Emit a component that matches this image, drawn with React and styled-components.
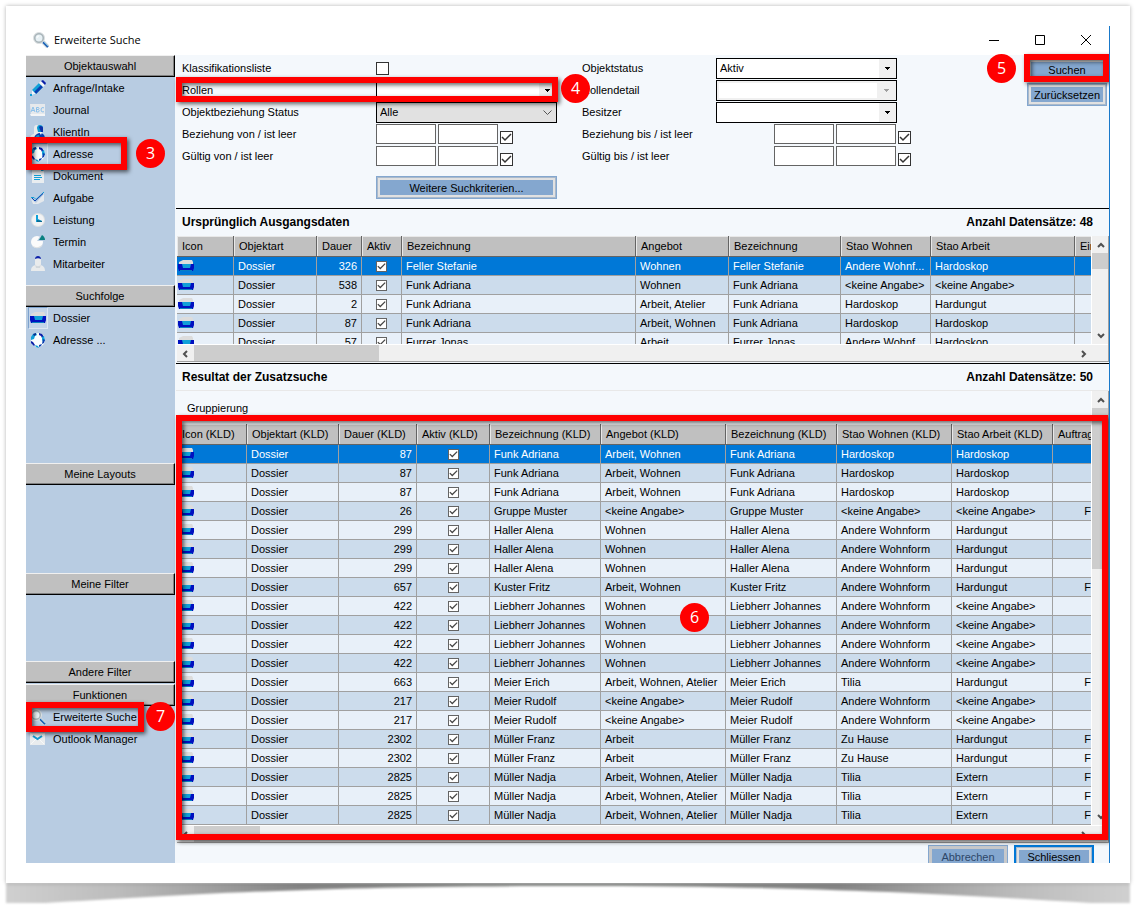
import { useState } from 'react'
import styled, { createGlobalStyle } from 'styled-components'

const SOURCE_COLUMNS = [
  { label: 'Icon', width: 57 },
  { label: 'Objektart', width: 83 },
  { label: 'Dauer', width: 45 },
  { label: 'Aktiv', width: 40 },
  { label: 'Bezeichnung', width: 234 },
  { label: 'Angebot', width: 93 },
  { label: 'Bezeichnung', width: 112 },
  { label: 'Stao Wohnen', width: 90 },
  { label: 'Stao Arbeit', width: 144 },
  { label: 'Eintritt' },
]

const RESULT_COLUMNS = [
  { label: 'Icon (KLD)', width: 70 },
  { label: 'Objektart (KLD)', width: 92 },
  { label: 'Dauer (KLD)', width: 78 },
  { label: 'Aktiv (KLD)', width: 73 },
  { label: 'Bezeichnung (KLD)', width: 111 },
  { label: 'Angebot (KLD)', width: 125 },
  { label: 'Bezeichnung (KLD)', width: 111 },
  { label: 'Stao Wohnen (KLD)', width: 115 },
  { label: 'Stao Arbeit (KLD)', width: 101 },
  { label: 'Auftrag' },
]

const NONE = '<keine Angabe>'

// [Dauer, Bezeichnung, Angebot, Stao Wohnen, Stao Arbeit, last column]
const SOURCE_ROWS = [
  [326, 'Feller Stefanie', 'Wohnen', 'Andere Wohnf...', 'Hardoskop'],
  [538, 'Funk Adriana', 'Wohnen', NONE, NONE],
  [2, 'Funk Adriana', 'Arbeit, Atelier', 'Hardoskop', 'Hardungut'],
  [87, 'Funk Adriana', 'Arbeit, Wohnen', 'Hardoskop', 'Hardoskop'],
  [57, 'Furrer Jonas', 'Arbeit', 'Andere Wohnf...', 'Hardoskop'],
]

const RESULT_ROWS = [
  [87, 'Funk Adriana', 'Arbeit, Wohnen', 'Hardoskop', 'Hardoskop'],
  [87, 'Funk Adriana', 'Arbeit, Wohnen', 'Hardoskop', 'Hardoskop'],
  [87, 'Funk Adriana', 'Arbeit, Wohnen', 'Hardoskop', 'Hardoskop'],
  [26, 'Gruppe Muster', NONE, NONE, NONE, 'F'],
  [299, 'Haller Alena', 'Wohnen', 'Andere Wohnform', 'Hardungut'],
  [299, 'Haller Alena', 'Wohnen', 'Andere Wohnform', 'Hardungut'],
  [299, 'Haller Alena', 'Wohnen', 'Andere Wohnform', 'Hardungut'],
  [657, 'Kuster Fritz', 'Arbeit, Wohnen', 'Andere Wohnform', 'Hardungut', 'F'],
  [422, 'Liebherr Johannes', 'Wohnen', 'Andere Wohnform', NONE],
  [422, 'Liebherr Johannes', 'Wohnen', 'Andere Wohnform', NONE],
  [422, 'Liebherr Johannes', 'Wohnen', 'Andere Wohnform', NONE],
  [422, 'Liebherr Johannes', 'Wohnen', 'Andere Wohnform', NONE],
  [663, 'Meier Erich', 'Arbeit, Wohnen, Atelier', 'Tilia', 'Hardungut', 'F'],
  [217, 'Meier Rudolf', NONE, 'Andere Wohnform', NONE],
  [217, 'Meier Rudolf', NONE, 'Andere Wohnform', NONE],
  [2302, 'Müller Franz', 'Arbeit', 'Zu Hause', 'Hardungut', 'F'],
  [2302, 'Müller Franz', 'Arbeit', 'Zu Hause', 'Hardungut', 'F'],
  [2825, 'Müller Nadja', 'Arbeit, Wohnen, Atelier', 'Tilia', 'Extern', 'F'],
  [2825, 'Müller Nadja', 'Arbeit, Wohnen, Atelier', 'Tilia', 'Extern', 'F'],
  [2825, 'Müller Nadja', 'Arbeit, Wohnen, Atelier', 'Tilia', 'Extern', 'F'],
]

export default function App() {
  return (
    <Page>
      <GlobalStyle />
      <Paper>
        <Window>
          <TitleBar>
            <SearchIcon />
            <Title>Erweiterte Suche</Title>
            <WindowButton aria-label="Minimieren">
              <Glyph d="M0 5.5h10" />
            </WindowButton>
            <WindowButton aria-label="Maximieren">
              <Glyph d="M.5 .5h9v9h-9z" />
            </WindowButton>
            <WindowButton aria-label="Fenster schliessen">
              <Glyph d="M0 0l10 10M10 0L0 10" />
            </WindowButton>
          </TitleBar>
          <Body>
            <Sidebar />
            <Main>
              <SearchForm />
              <GridTitle title="Ursprünglich Ausgangsdaten" count={48} />
              <GridFrame $height={126}>
                <DataGrid columns={SOURCE_COLUMNS} rows={SOURCE_ROWS} />
                <VerticalBar thumb={16} />
                <HorizontalBar thumb={185} />
              </GridFrame>
              <GridTitle title="Resultat der Zusatzsuche" count={50} ruled />
              <GridFrame>
                <div>
                  <GroupBar>Gruppierung</GroupBar>
                  <DataGrid columns={RESULT_COLUMNS} rows={RESULT_ROWS} />
                </div>
                <VerticalBar thumb={161} />
                <HorizontalBar thumb={66} />
                <Mark $top={24} $left={-1} $right={0} $bottom={2} />
                <Badge $top={212} $left={503}>
                  6
                </Badge>
              </GridFrame>
              <Footer>
                <Button disabled>Abbrechen</Button>
                <Button $primary>Schliessen</Button>
              </Footer>
            </Main>
          </Body>
        </Window>
      </Paper>
      <Curl viewBox="0 0 1000 20" preserveAspectRatio="none" aria-hidden="true">
        <defs>
          <linearGradient id="curl">
            <stop offset="0" stopColor="#d0d0d0" />
            <stop offset="0.1" stopColor="#bcbcbc" />
            <stop offset="0.26" stopColor="#858585" />
            <stop offset="0.5" stopColor="#8c8f8c" />
            <stop offset="0.74" stopColor="#858585" />
            <stop offset="0.9" stopColor="#bcbcbc" />
            <stop offset="1" stopColor="#d0d0d0" />
          </linearGradient>
        </defs>
        <path
          fill="url(#curl)"
          d="M0 0H1000V20H965C860 13 740 3 500 3S140 13 35 20H0Z"
        />
      </Curl>
    </Page>
  )
}

function Sidebar() {
  return (
    <Nav>
      <Section $height={230}>
        <SectionTitle>Objektauswahl</SectionTitle>
        <NavItem icon={<PencilIcon />}>Anfrage/Intake</NavItem>
        <NavItem icon={<JournalIcon />}>Journal</NavItem>
        <NavItem icon={<ClientIcon />}>KlientIn</NavItem>
        <NavItem
          icon={<GlobeIcon />}
          pressed
          mark={
            <>
              <Mark $top={-6} $left={0} $bottom={-5} $width={101} />
              <Badge $top={-4} $left={110}>
                3
              </Badge>
            </>
          }
        >
          Adresse
        </NavItem>
        <NavItem icon={<DocumentIcon />}>Dokument</NavItem>
        <NavItem icon={<CheckIcon />}>Aufgabe</NavItem>
        <NavItem icon={<ClockIcon />}>Leistung</NavItem>
        <NavItem icon={<PieIcon />}>Termin</NavItem>
        <NavItem icon={<PersonIcon />}>Mitarbeiter</NavItem>
      </Section>
      <Section $height={178}>
        <SectionTitle>Suchfolge</SectionTitle>
        <NavItem icon={<FolderIcon />} pressed>
          Dossier
        </NavItem>
        <NavItem icon={<GlobeIcon />}>Adresse ...</NavItem>
      </Section>
      <Section $height={110}>
        <SectionTitle>Meine Layouts</SectionTitle>
      </Section>
      <Section $height={88}>
        <SectionTitle>Meine Filter</SectionTitle>
      </Section>
      <Section $height={23}>
        <SectionTitle>Andere Filter</SectionTitle>
      </Section>
      <Section $height={66}>
        <SectionTitle>Funktionen</SectionTitle>
        <NavItem
          icon={<SearchIcon />}
          mark={
            <>
              <Mark $top={-4} $left={0} $bottom={-4} $width={118} />
              <Badge $top={-4} $left={120}>
                7
              </Badge>
            </>
          }
        >
          Erweiterte Suche
        </NavItem>
        <NavItem icon={<MailIcon />}>Outlook Manager</NavItem>
      </Section>
    </Nav>
  )
}

function NavItem({ icon, pressed, mark, children }) {
  return (
    <NavRow>
      <NavButton>
        <IconSlot $pressed={pressed}>{icon}</IconSlot>
        {children}
      </NavButton>
      {mark}
    </NavRow>
  )
}

function SearchForm() {
  return (
    <Form onSubmit={event => event.preventDefault()}>
      <FieldGroup $label={200} $width={400}>
        <Row>
          <label htmlFor="list">Klassifikationsliste</label>
          <CheckBox id="list" type="checkbox" />
        </Row>
        <Row>
          <label htmlFor="roles">Rollen</label>
          <Combo id="roles" />
          <Mark $top={-2} $left={0} $bottom={-1} $width={382} />
          <Badge $top={-5} $left={385}>
            4
          </Badge>
        </Row>
        <Row>
          <label htmlFor="relation">Objektbeziehung Status</label>
          <Combo id="relation" value="Alle" flat />
        </Row>
        <DateRow id="relation-from" label="Beziehung von / ist leer" />
        <DateRow id="valid-from" label="Gültig von / ist leer" />
        <MoreButton>Weitere Suchkriterien...</MoreButton>
      </FieldGroup>
      <FieldGroup $label={140} $width={340}>
        <Row>
          <label htmlFor="status">Objektstatus</label>
          <Combo id="status" value="Aktiv" />
        </Row>
        <Row>
          <label htmlFor="role-detail">Rollendetail</label>
          <Combo id="role-detail" disabled />
        </Row>
        <Row>
          <label htmlFor="owner">Besitzer</label>
          <Combo id="owner" />
        </Row>
        <DateRow id="relation-to" label="Beziehung bis / ist leer" labelWidth={198} />
        <DateRow id="valid-to" label="Gültig bis / ist leer" labelWidth={198} />
      </FieldGroup>
      <Actions>
        <ActionSlot>
          <Button type="submit">Suchen</Button>
          <Mark $top={-4} $left={-3} $right={-2} $bottom={-1} />
          <Badge $top={-4} $left={-40}>
            5
          </Badge>
        </ActionSlot>
        <Button type="reset">Zurücksetzen</Button>
      </Actions>
    </Form>
  )
}

function Combo({ id, value = '', flat, disabled }) {
  return (
    <ComboBox>
      <Select id={id} $flat={flat} disabled={disabled} defaultValue={value}>
        <option>{value}</option>
      </Select>
      <ComboArrow $flat={flat} $disabled={disabled}>
        {flat ? (
          <svg width="9" height="5" fill="none" stroke="#555">
            <path d="M.5 .5l4 4 4-4" />
          </svg>
        ) : (
          <svg width="5" height="3" fill={disabled ? '#a0a0a0' : '#000'}>
            <path d="M0 0h5v1H4v1H3v1H2V2H1V1H0z" />
          </svg>
        )}
      </ComboArrow>
    </ComboBox>
  )
}

function DateRow({ id, label, labelWidth }) {
  return (
    <Row $label={labelWidth}>
      <label htmlFor={id}>{label}</label>
      <DateInput id={id} />
      <DateInput aria-label={`${label}, Ende`} />
      <CheckBox type="checkbox" aria-label={`${label}: leer`} defaultChecked $low />
    </Row>
  )
}

function GridTitle({ title, count, ruled }) {
  return (
    <GridHeading $ruled={ruled}>
      <h2>{title}</h2>
      <h2>Anzahl Datensätze: {count}</h2>
    </GridHeading>
  )
}

function DataGrid({ columns, rows }) {
  const [selected, setSelected] = useState(0)
  return (
    <Clip>
      <Table>
        <colgroup>
          {columns.map((column, index) => (
            <Col key={index} $width={column.width} />
          ))}
        </colgroup>
        <thead>
          <tr>
            {columns.map((column, index) => (
              <HeadCell key={index}>{column.label}</HeadCell>
            ))}
          </tr>
        </thead>
        <tbody>
          {rows.map(([days, name, offer, living, work, order], index) => (
            <BodyRow
              key={index}
              $selected={index === selected}
              onClick={() => setSelected(index)}
            >
              <Cell $icon>
                <FolderIcon />
              </Cell>
              <Cell>Dossier</Cell>
              <Cell $align="right">{days}</Cell>
              <Cell $align="center">
                <CellCheck type="checkbox" aria-label="Aktiv" defaultChecked />
              </Cell>
              <Cell>{name}</Cell>
              <Cell>{offer}</Cell>
              <Cell>{name}</Cell>
              <Cell>{living}</Cell>
              <Cell>{work}</Cell>
              <Cell $align="right">{order}</Cell>
            </BodyRow>
          ))}
        </tbody>
      </Table>
    </Clip>
  )
}

function VerticalBar({ thumb }) {
  return (
    <VBar>
      <BarButton aria-label="Nach oben">
        <Arrow d="M1 6l3-3 3 3" />
      </BarButton>
      <VThumb $size={thumb} />
      <BarButton aria-label="Nach unten">
        <Arrow d="M1 2l3 3 3-3" />
      </BarButton>
    </VBar>
  )
}

function HorizontalBar({ thumb }) {
  return (
    <HBar>
      <BarButton aria-label="Nach links">
        <Arrow d="M5 1L2 4l3 3" />
      </BarButton>
      <HThumb $size={thumb} />
      <BarButton aria-label="Nach rechts">
        <Arrow d="M2 1l3 3-3 3" />
      </BarButton>
    </HBar>
  )
}

const Arrow = ({ d }) => (
  <svg width="8" height="8" fill="none" stroke="#505050" strokeWidth="2">
    <path d={d} />
  </svg>
)

const Glyph = ({ d }) => (
  <svg width="10" height="10" fill="none" stroke="#000">
    <path d={d} />
  </svg>
)

const Icon = ({ children }) => (
  <svg width="16" height="16" viewBox="0 0 16 16" fill="none" aria-hidden="true">
    {children}
  </svg>
)

const SearchIcon = () => (
  <Icon>
    <path d="M10 10l5 5" stroke="#d2dae0" strokeWidth="4" />
    <path d="M10 10l5 5" stroke="#1d5fb4" strokeWidth="2" />
    <path d="M11 10l4 4" stroke="#7fb9dc" />
    <circle cx="6" cy="6" r="4.5" fill="#e8f1f5" stroke="#a8b4b9" strokeWidth="2" />
    <circle cx="6" cy="6" r="5.5" stroke="#dde1e3" />
    <path d="M4 6a2 2 0 0 1 2-2" stroke="#fff" />
  </Icon>
)

const PencilIcon = () => (
  <Icon>
    <path d="M2 10l7-7 4 4-7 7-4 1z" fill="#10a0d8" />
    <path d="M4 12l7-7 2 2-7 7z" fill="#0b3fb0" />
    <path d="M9 3l2-2 4 4-2 2z" fill="#f4f6f8" />
    <path d="M11 1l2-1 3 3-1 2z" fill="#0b1fa8" />
    <path d="M2 10l4 4-4 1z" fill="#f4f6f8" />
    <path d="M0 14h2v2H0z" fill="#10a0d8" />
  </Icon>
)

const JournalIcon = () => (
  <Icon>
    <path d="M0 2h15v12H1z" fill="#e6e9ec" />
    <path d="M0 12h15v2H1z" fill="#f4f5f6" />
    <path
      d="M1 10l2-5 2 5M2 8.500h2M6.500 10V5.500h2l.5 1-.5 1h-2m2 0l.7 1.200-.7 1.300h-2M14 6l-1-.5-1.500.5-.5 2 .5 1.500 1.500.5 1-.5"
      stroke="#8cc0ea"
    />
  </Icon>
)

const ClientIcon = () => (
  <Icon>
    <path d="M4 4c0-4 5-4 5 0v4l2 7H0c0-3 1-4 4-5z" fill="#e9ebec" />
    <path d="M7 4c0-4 6-4 6 0v4H8z" fill="#0a98d0" />
    <path d="M9 3c1-2 4-1 4 1v4h-2z" fill="#0b2fa8" />
    <path d="M4 15c0-3 2-5 5-6 4 0 6 2 6 6z" fill="#0b3fb0" />
    <path d="M9 8h3l-1 3z" fill="#f4f6f8" />
    <path d="M5 14c1-2 2-3 4-3l1 4z" fill="#10a0d8" />
  </Icon>
)

const GlobeIcon = () => (
  <Icon>
    <circle cx="8" cy="8" r="7" fill="#fbfdfe" />
    <path d="M1 5l2-3 3-1 1 2-2 1-1 3-3 1z" fill="#10a0d8" />
    <path d="M3 2l3-1v2L4 4z" fill="#0b2f90" />
    <path d="M9 1l3 1 2 3-2 1-1-2-2-1z" fill="#0b1fa8" />
    <path d="M12 5l2-1 1 4-2 2-1-2z" fill="#10a0d8" />
    <path d="M13 7l2 1-1 3-2 1z" fill="#0b3fb0" />
    <path d="M1 9l2 1 2 3-1 1-3-3z" fill="#0b1fa8" />
    <path d="M5 13l3 1 1 2-3-1z" fill="#10a0d8" />
    <path d="M9 13l3-1-1 2-2 1z" fill="#0b3fb0" />
  </Icon>
)

const DocumentIcon = () => (
  <Icon>
    <path d="M2 0h9l3 3v12H2z" fill="#e9edf0" />
    <path d="M11 0l3 3h-3z" fill="#10a0d8" />
    <path d="M4 7h7v1H4zM4 9h8v1H4zM4 11h6v1H4z" fill="#10a0d8" />
  </Icon>
)

const CheckIcon = () => (
  <Icon>
    <path d="M1 9l5 4 8-9v7l-6 3H3z" fill="#e4e8ec" />
    <path d="M1 7.500h3l2 2L14 2" stroke="#10a0d8" />
    <path d="M2 8l3 3 8-7.500" stroke="#0b3fae" />
  </Icon>
)

const ClockIcon = () => (
  <Icon>
    <circle cx="8" cy="8" r="7" fill="#dfe1e2" />
    <circle cx="8" cy="8" r="6" fill="#f2f3f4" />
    <path d="M6 3h2v4l4 2v1H6z" fill="#10a0d8" />
    <path d="M7 8l5 1v1H7z" fill="#0a6a90" />
  </Icon>
)

const PieIcon = () => (
  <Icon>
    <circle cx="7" cy="8" r="6" fill="#fbfbfb" />
    <path d="M2 11c3 3 7 3 11-1-1 5-9 6-11 1z" fill="#dde0e2" />
    <path d="M7 7l4-6c3 1 4 3 4 6z" fill="#b8cce2" />
    <path d="M9 6l3-5c2 1 3 3 3 5z" fill="#0a8080" />
  </Icon>
)

const PersonIcon = () => (
  <Icon>
    <path d="M1 15c0-4 2-5 4-6V4c0-4 6-4 6 0v5c2 1 4 2 4 6z" fill="#e9ebec" />
    <path d="M5 8c1 3 5 3 6 0l-1 4H6z" fill="#d2d7db" />
    <path d="M5 3c0-4 6-4 6 0-2-1-4-1-6 0z" fill="#0b1fa8" />
  </Icon>
)

const MailIcon = () => (
  <Icon>
    <path d="M0 2h15v12H0z" fill="#e9ecee" />
    <path d="M1 3l4 3h5l4-3" stroke="#f8f9f9" />
    <path d="M3 5l4.500 3L12 5" stroke="#149bd2" strokeWidth="2" />
    <path d="M1 13l5-5M14 13L9 8" stroke="#f8f9f9" />
  </Icon>
)

const FolderIcon = () => (
  <Icon>
    <path d="M3 3l2-1h9l1 2v3H1V4z" fill="#dcdcdc" />
    <path d="M0 6h16v4l-1 3H1L0 10z" fill="#0010c0" />
    <path d="M4 6h9l-1 4H5z" fill="#10a0d8" />
    <path d="M2 12h12v1H2z" fill="#0a80c0" />
  </Icon>
)

const tick = color =>
  `url("data:image/svg+xml,%3Csvg xmlns='http://www.w3.org/2000/svg' viewBox='0 0 11 11'%3E%3Cpath d='M1 5l3 3 6-6' fill='none' stroke='%23${color}' stroke-width='1.500'/%3E%3C/svg%3E")`

const GlobalStyle = createGlobalStyle`
  *, *::before, *::after { box-sizing: border-box; }
  body {
    margin: 0;
    background: #fff;
    color: #000;
    font: 11px/14px 'Liberation Sans', Arial, sans-serif;
  }
  button, input, select { margin: 0; color: inherit; font: inherit; }
`

const Page = styled.div`
  display: flex;
  flex-direction: column;
  height: 100vh;
  min-height: 640px;
  padding: 6px 14px 9px 6px;
`

const Paper = styled.div`
  position: relative;
  z-index: 1;
  display: flex;
  flex: 1;
  min-height: 0;
  padding: 20px;
  background: #fff;
  box-shadow: 0 0 4px rgba(0, 0, 0, 0.3);
`

const Curl = styled.svg`
  width: 100%;
  height: 20px;
  overflow: visible;
  filter: blur(1px);
`

const Window = styled.div`
  display: flex;
  flex: 1;
  flex-direction: column;
  min-width: 0;
  overflow: hidden;
  border-right: 1px solid #1979ca;
`

const TitleBar = styled.header`
  display: flex;
  flex: none;
  align-items: center;
  height: 29px;
  padding: 0 0 2px 7px;
`

const Title = styled.h1`
  flex: 1;
  margin: 0 0 0 5px;
  font: 11px/16px 'Open Sans', sans-serif;
`

const WindowButton = styled.button`
  display: grid;
  place-items: center;
  width: 46px;
  height: 27px;
  padding: 0;
  border: 0;
  background: none;
`

const Body = styled.div`
  display: flex;
  flex: 1;
  min-height: 0;
`

const Nav = styled.nav`
  flex: none;
  width: 149px;
  background: #b8cce2;
`

const Section = styled.section`
  min-height: ${props => props.$height}px;
`

const SectionTitle = styled.h2`
  height: 22px;
  margin: 0;
  border-top: 1px solid #f0f0f0;
  border-right: 1px solid #000;
  border-bottom: 1px solid #000;
  box-shadow: inset -1px -1px #808080;
  background: #c0c0c0;
  font-size: 11px;
  font-weight: normal;
  line-height: 20px;
  text-align: center;
`

const NavRow = styled.div`
  position: relative;
  height: 22px;
`

const NavButton = styled.button`
  display: flex;
  align-items: center;
  gap: 5px;
  width: 100%;
  height: 22px;
  padding: 0 0 0 2px;
  border: 0;
  background: none;
  text-align: left;
`

const IconSlot = styled.span`
  display: grid;
  place-items: center;
  width: 20px;
  height: 22px;
  border: 1px solid transparent;
  ${props =>
    props.$pressed &&
    'border-color: #7da2ce #dce6f2 #dce6f2 #7da2ce; background: #c3d4e8;'}
`

const Main = styled.main`
  display: flex;
  flex: 1;
  flex-direction: column;
  min-width: 0;
  padding-left: 1px;
  background: #f4f8fc;
`

const Form = styled.form`
  display: flex;
  flex: none;
  height: 154px;
  padding-top: 2px;
  border-bottom: 1px solid #000;
`

const FieldGroup = styled.div`
  --label: ${props => props.$label}px;
  width: ${props => props.$width}px;
`

const Row = styled.div`
  position: relative;
  display: flex;
  align-items: center;
  gap: 2px;
  height: 22px;

  > label {
    width: ${props => (props.$label ? `${props.$label}px` : 'var(--label)')};
    margin-right: -2px;
    padding-left: 6px;
  }
`

const ComboBox = styled.div`
  display: grid;
  width: 181px;
`

const Select = styled.select`
  grid-area: 1 / 1;
  height: 21px;
  padding: 0 20px 0 3px;
  border: 1px solid #000;
  border-radius: 0;
  outline: 0;
  appearance: none;
  background: ${props => (props.$flat ? '#e1e1e1' : '#fff')};
  opacity: 1;

  &:disabled {
    box-shadow: inset 0 0 0 2px #f0f0f0;
  }
`

const ComboArrow = styled.span`
  display: grid;
  grid-area: 1 / 1;
  place-items: center;
  justify-self: end;
  width: ${props => (props.$disabled ? 19 : 17)}px;
  margin: 1px;
  background: ${props => (props.$flat ? '#e1e1e1' : '#f0f0f0')};
  pointer-events: none;
`

const DateInput = styled.input`
  width: 60px;
  height: 20px;
  padding: 0 2px;
  border: 1px solid #646464;
  border-radius: 0;
  background: #fff;
`

const CheckBox = styled.input`
  width: 13px;
  height: 13px;
  border: 1px solid #333;
  appearance: none;
  background: #fff;
  ${props => props.$low && 'align-self: flex-end; margin-bottom: 1px;'}

  &:checked {
    background: #fff ${tick('333')} center / 11px;
  }
`

const Button = styled.button`
  min-width: 80px;
  height: 23px;
  padding: 0 6px;
  border: ${props => (props.$primary ? '2px solid #0078d7' : '1px solid #84a7cf')};
  box-shadow: inset 0 0 0 1px #a9b9cb, inset 0 0 0 3px #e1e1e1;
  background: #84a7cf;
  line-height: 18px;

  &:disabled {
    box-shadow: inset 0 0 0 3px #c6c8ca;
    color: #2d4668;
  }
`

const MoreButton = styled(Button).attrs({ type: 'button' })`
  width: 181px;
  margin: 9px 0 0 var(--label);
`

const Actions = styled.div`
  display: flex;
  flex-direction: column;
  gap: 2px;
  margin-left: auto;
  padding: 1px 2px 0 0;
`

const ActionSlot = styled.div`
  position: relative;

  > button {
    display: block;
    width: 100%;
  }
`

const GridHeading = styled.header`
  display: flex;
  flex: none;
  justify-content: space-between;
  height: ${props => (props.$ruled ? 28 : 27)}px;
  padding: 0 16px 0 6px;
  ${props =>
    props.$ruled && 'border-top: 1px solid #000; border-bottom: 1px solid #e8e8e8;'}

  h2 {
    margin: 0;
    font-size: 12px;
    line-height: 26px;
  }
`

const GridFrame = styled.div`
  position: relative;
  display: grid;
  flex: ${props => (props.$height ? 'none' : 1)};
  grid-template: minmax(0, 1fr) 16px / minmax(0, 1fr) 16px;
  gap: 1px;
  height: ${props => (props.$height ? `${props.$height}px` : 'auto')};
  min-height: 0;
  margin: 0 0 1px 1px;
  border-right: 1px solid #a0a0a0;
  border-bottom: 1px solid #a0a0a0;
  background: #fff;

  > div:first-child {
    min-height: 0;
    overflow: hidden;
  }
`

const GroupBar = styled.div`
  height: 33px;
  padding: 10px 10px 0;
  background: #f4f8fc;
`

const Clip = styled.div`
  overflow: hidden;
`

const Table = styled.table`
  width: 100%;
  table-layout: fixed;
  border-spacing: 0;
`

const Col = styled.col`
  width: ${props => (props.$width ? `${props.$width}px` : 'auto')};
`

const HeadCell = styled.th`
  height: 21px;
  padding: 0 0 0 5px;
  border-right: 1px solid #646464;
  border-bottom: 1px solid #646464;
  box-shadow: inset 1px 1px #e8e8e8;
  background: #c0c0c0;
  font-weight: normal;
  text-align: left;
  white-space: nowrap;
  overflow: hidden;

  &:last-child {
    border-right: 0;
  }
`

const Cell = styled.td`
  height: 19px;
  padding: ${props => (props.$icon ? '0 0 0 1px' : '0 4px')};
  border-right: 1px solid #a0a0a0;
  border-bottom: 1px solid #a0a0a0;
  text-align: ${props => props.$align || 'left'};
  white-space: nowrap;
  overflow: hidden;

  &:last-child {
    border-right: 0;
    padding-right: 0;
  }

  svg {
    display: block;
  }
`

const BodyRow = styled.tr`
  background: #e8f0f9;

  &:nth-child(even) {
    background: #ccdcec;
  }
  ${props => props.$selected && '&& { background: #0078d7; color: #fff; }'}
`

const CellCheck = styled.input`
  display: block;
  width: 11px;
  height: 11px;
  margin: 0 auto;
  border: 1px solid #646464;
  appearance: none;
  background: #fff;

  &:checked {
    background: #fff ${tick('444')} center / 9px;
  }
`

const VBar = styled.div`
  display: flex;
  flex-direction: column;
  background: #f0f0f0;

  > button:last-child {
    margin-top: auto;
  }
`

const HBar = styled.div`
  display: flex;
  grid-column: 1 / -1;
  padding-right: 16px;
  background: #f0f0f0;

  > button:last-child {
    margin-left: auto;
  }
`

const BarButton = styled.button`
  display: grid;
  place-items: center;
  flex: none;
  width: 17px;
  height: 17px;
  padding: 0;
  border: 0;
  background: none;
`

const VThumb = styled.div`
  height: ${props => props.$size}px;
  background: #cdcdcd;
`

const HThumb = styled.div`
  width: ${props => props.$size}px;
  background: #cdcdcd;
`

const Footer = styled.footer`
  display: flex;
  flex: none;
  justify-content: flex-end;
  gap: 6px;
  height: 19px;
  padding: 1px 15px 0 0;
`

const px = value => (value === undefined ? 'auto' : `${value}px`)

const Mark = styled.div`
  position: absolute;
  z-index: 2;
  top: ${props => px(props.$top)};
  right: ${props => px(props.$right)};
  bottom: ${props => px(props.$bottom)};
  left: ${props => px(props.$left)};
  width: ${props => px(props.$width)};
  border: 6px solid #f00;
  filter: drop-shadow(2px 2px 2px rgba(0, 0, 0, 0.6));
  pointer-events: none;
`

const Badge = styled.span`
  position: absolute;
  z-index: 3;
  top: ${props => props.$top}px;
  left: ${props => props.$left}px;
  width: 29px;
  height: 29px;
  border-radius: 50%;
  background: #f00;
  color: #fff;
  font: 16px/28px 'Open Sans', sans-serif;
  text-align: center;
`
